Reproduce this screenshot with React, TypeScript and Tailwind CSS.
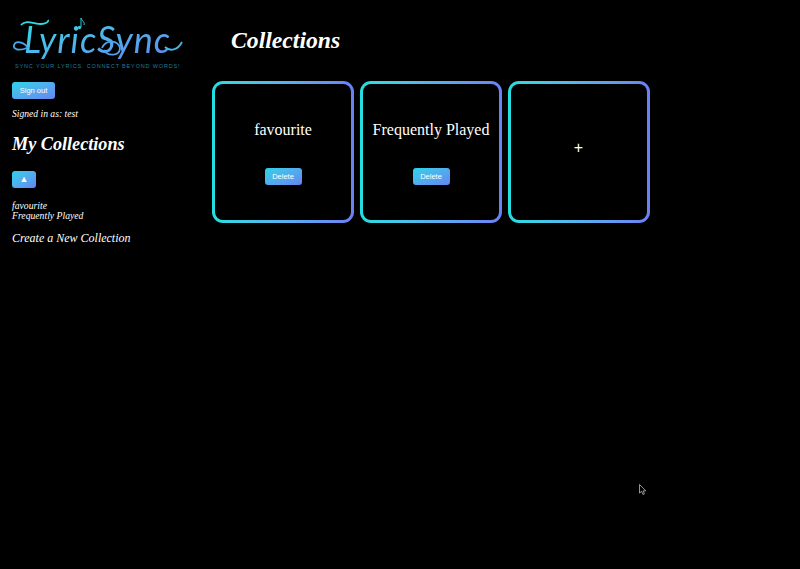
const collections = ["favourite", "Frequently Played"];

function GradientButton({ label, className }: { label: string; className: string }) {
  return (
    <button
      className={`flex items-center justify-center rounded-[3px] bg-gradient-to-br from-[#27d3e6] to-[#6384f2] font-['Liberation_Sans',sans-serif] text-white ${className}`}
    >
      {label}
    </button>
  );
}

function Card({ children }: { children: React.ReactNode }) {
  return (
    <div className="h-[142px] w-[142px] rounded-[11px] bg-gradient-to-r from-[#22dfe0] to-[#6b80f5] p-[3px]">
      <div className="flex h-full w-full flex-col items-center rounded-[8px] bg-black">{children}</div>
    </div>
  );
}

function Logo() {
  return (
    <div className="relative h-[70px] w-[176px]">
      <span className="absolute left-[12px] top-[14px] whitespace-nowrap bg-gradient-to-br from-[#27dfe4] to-[#5f86ee] bg-clip-text font-['Lato',sans-serif] text-[36px] leading-[42px] tracking-[1px] text-transparent italic">
        LyricSync
      </span>
      <svg className="absolute inset-0" width="176" height="70" viewBox="0 0 176 70" fill="none" aria-hidden="true">
        <path d="M9 21C14 15 22 20 29 20C33 20 37 18 36 16" stroke="#2bdce4" strokeWidth="1.8" />
        <path d="M15 44C8 47 1 46 2 41C4 36 12 38 16 44" stroke="#45a9ec" strokeWidth="1.8" />
        <path d="M90 44C94 35 106 36 108 44C108 52 96 53 92 46" stroke="#4fa3ee" strokeWidth="1.8" />
        <path d="M153 43C158 48 166 46 170 38" stroke="#3fb8ea" strokeWidth="1.8" />
        <path d="M69 23V14C70 17 73 18 72 21" stroke="#2fc9d8" strokeWidth="1" />
        <circle cx="67.5" cy="23.5" r="1.7" fill="#2fc9d8" />
      </svg>
      <span className="absolute left-[3px] top-[59px] whitespace-nowrap font-['Liberation_Sans',sans-serif] text-[5.5px] leading-[7px] tracking-[0.84px] text-[#1f7f96]">
        SYNC YOUR LYRICS. CONNECT BEYOND WORDS!
      </span>
    </div>
  );
}

export default function App() {
  return (
    <div className="relative flex h-[569px] w-[800px] overflow-hidden bg-black font-['Liberation_Serif',serif] text-white">
      <aside className="flex w-[212px] shrink-0 flex-col pl-[12px] pt-[4px]">
        <Logo />
        <GradientButton label="Sign out" className="mt-[8px] h-[17px] w-[43px] text-[7.5px]" />
        <p className="mt-[9px] text-[9.6px] leading-[12px] italic">Signed in as: test</p>
        <h2 className="mt-[13px] text-[18.2px] leading-[23px] font-bold italic">My Collections</h2>
        <GradientButton label="▲" className="mt-[15px] h-[17px] w-[24px] text-[9px]" />
        <ul className="mt-[13px] text-[9.7px] leading-[10px] italic">
          {collections.map((name) => (
            <li key={name}>{name}</li>
          ))}
        </ul>
        <p className="mt-[10px] text-[12px] leading-[15px] italic">Create a New Collection</p>
      </aside>
      <main className="flex flex-col pt-[26px]">
        <h1 className="pl-[19px] text-[23.7px] leading-[29px] font-bold italic">Collections</h1>
        <div className="mt-[26px] flex gap-[6px]">
          {collections.map((name) => (
            <Card key={name}>
              <p className="mt-[36px] text-[16px] leading-[20px]">{name}</p>
              <GradientButton label="Delete" className="mt-[28px] h-[17px] w-[37px] text-[7.5px]" />
            </Card>
          ))}
          <Card>
            <p className="mt-[54px] pr-[1px] font-['Liberation_Sans',sans-serif] text-[16px] leading-[20px]">+</p>
          </Card>
        </div>
      </main>
      <svg className="absolute left-[639px] top-[484px]" width="8" height="12" viewBox="0 0 8 12" aria-hidden="true">
        <path d="M0.5 0.5V9L2.6 7.3L4 10.5L5.4 9.9L4.1 6.9H6.8Z" fill="#000" stroke="#bbb" strokeWidth="0.8" />
      </svg>
    </div>
  );
}
